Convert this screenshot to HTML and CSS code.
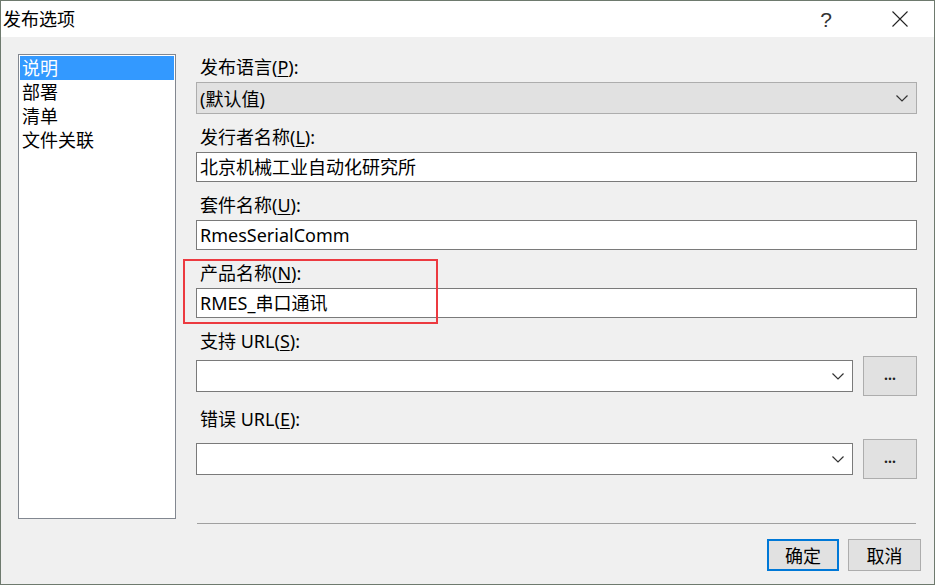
FILE: index.html
```html
<!DOCTYPE html>
<html lang="zh-CN">

<head>
	<meta charset="UTF-8">
	<title>发布选项</title>
	<link rel="stylesheet" href="styles.css">
</head>

<body>
	<div class="window">
		<div class="titlebar">
			<span class="title">发布选项</span>
			<span class="help">?</span>
			<span class="close">
				<svg width="16" height="16" viewBox="0 0 16 16"><path d="M0.5 0.5L15.5 15.5M15.5 0.5L0.5 15.5" stroke="#222" stroke-width="1.1" fill="none"/></svg>
			</span>
		</div>
		<div class="content">
			<ul class="nav">
				<li class="selected">说明</li>
				<li>部署</li>
				<li>清单</li>
				<li>文件关联</li>
			</ul>
			<div class="panel">
				<div class="field">
					<label>发布语言(<u>P</u>):</label>
					<div class="combo disabled">
						<span>(默认值)</span>
						<svg class="chevron" width="12" height="7" viewBox="0 0 12 7"><path d="M0.5 0.5L6 6L11.5 0.5" stroke="#333" stroke-width="1.2" fill="none"/></svg>
					</div>
				</div>
				<div class="field">
					<label>发行者名称(<u>L</u>):</label>
					<div class="textbox">北京机械工业自动化研究所</div>
				</div>
				<div class="field">
					<label>套件名称(<u>U</u>):</label>
					<div class="textbox">RmesSerialComm</div>
				</div>
				<div class="field marked">
					<label>产品名称(<u>N</u>):</label>
					<div class="textbox">RMES_串口通讯</div>
					<div class="highlight-box"></div>
				</div>
				<div class="field">
					<label>支持 URL(<u>S</u>):</label>
					<div class="combo-row">
						<div class="combo">
							<span></span>
							<svg class="chevron" width="12" height="7" viewBox="0 0 12 7"><path d="M0.5 0.5L6 6L11.5 0.5" stroke="#333" stroke-width="1.2" fill="none"/></svg>
						</div>
						<button class="browse">...</button>
					</div>
				</div>
				<div class="field error-url">
					<label>错误 URL(<u>E</u>):</label>
					<div class="combo-row">
						<div class="combo">
							<span></span>
							<svg class="chevron" width="12" height="7" viewBox="0 0 12 7"><path d="M0.5 0.5L6 6L11.5 0.5" stroke="#333" stroke-width="1.2" fill="none"/></svg>
						</div>
						<button class="browse">...</button>
					</div>
				</div>
				<div class="separator"></div>
				<div class="buttons">
					<button class="btn default">确定</button>
					<button class="btn">取消</button>
				</div>
			</div>
		</div>
	</div>
</body>

</html>
```

FILE: styles.css
```css
body {
	margin: 0;
	font-family: "Noto Sans", "Noto Sans CJK SC", sans-serif;
	font-size: 18px;
	color: #000;
}

.window {
	width: 935px;
	height: 585px;
	box-sizing: border-box;
	border: 1px solid #6e7a6e;
	background-color: #f0f0f0;
	display: flex;
	flex-direction: column;
}

.titlebar {
	height: 36px;
	background-color: white;
	display: flex;
	align-items: center;
	padding-left: 2px;
}

.title {
	flex: 1;
	line-height: 24px;
}

.help {
	font-family: "Liberation Sans", sans-serif;
	font-size: 21px;
	color: #333;
	margin-right: 60px;
	margin-top: 1px;
}

.close {
	display: flex;
	margin-right: 26px;
}

.content {
	flex: 1;
	display: flex;
	padding: 17px 13px 13px 17px;
}

.nav {
	list-style: none;
	margin: 0;
	padding: 1px;
	width: 158px;
	height: 465px;
	box-sizing: border-box;
	border: 1px solid #828790;
	background-color: white;
}

.nav li {
	height: 24px;
	line-height: 24px;
	padding-left: 2px;
}

.nav li.selected {
	background-color: #3399ff;
	color: white;
}

.panel {
	flex: 1;
	margin-left: 20px;
	display: flex;
	flex-direction: column;
}

.field {
	position: relative;
	margin-right: 4px;
	margin-top: 11px;
}

.field:first-child {
	margin-top: 1px;
}

.field label {
	display: block;
	height: 24px;
	line-height: 24px;
	padding-left: 4px;
	margin-bottom: 3px;
}

.field.error-url label {
	margin-bottom: 8px;
}

.field u {
	text-decoration-thickness: 1px;
	text-underline-offset: 2px;
}

.combo {
	height: 32px;
	box-sizing: border-box;
	border: 1px solid #7a7a7a;
	background-color: white;
	display: flex;
	align-items: center;
	padding: 0 8px 0 3px;
}

.combo span {
	flex: 1;
}

.combo.disabled {
	background-color: #e1e1e1;
	border-color: #adadad;
}

.textbox {
	height: 30px;
	box-sizing: border-box;
	border: 1px solid #7a7a7a;
	background-color: white;
	line-height: 28px;
	padding-left: 3px;
}

.combo-row {
	display: flex;
	align-items: center;
	gap: 10px;
}

.combo-row .combo {
	flex: 1;
}

.browse {
	width: 54px;
	height: 40px;
	border: 1px solid #adadad;
	background-color: #e1e1e1;
	font-family: "Noto Sans", sans-serif;
	font-size: 14px;
	font-weight: bold;
	color: #222;
	padding: 0 0 4px 0;
}

.highlight-box {
	position: absolute;
	left: -13px;
	top: -2px;
	width: 255px;
	height: 65px;
	box-sizing: border-box;
	border: 2px solid #ec3a40;
}

.separator {
	margin-top: auto;
	margin-left: 1px;
	margin-right: 5px;
	height: 1px;
	background-color: #a0a0a0;
}

.buttons {
	display: flex;
	justify-content: flex-end;
	gap: 9px;
	margin-top: 15px;
}

.btn {
	width: 73px;
	height: 32px;
	border: 1px solid #adadad;
	background-color: #e1e1e1;
	font-family: "Noto Sans", "Noto Sans CJK SC", sans-serif;
	font-size: 18px;
	padding: 0;
}

.btn.default {
	width: 72px;
	border: 2px solid #0078d7;
}
```
